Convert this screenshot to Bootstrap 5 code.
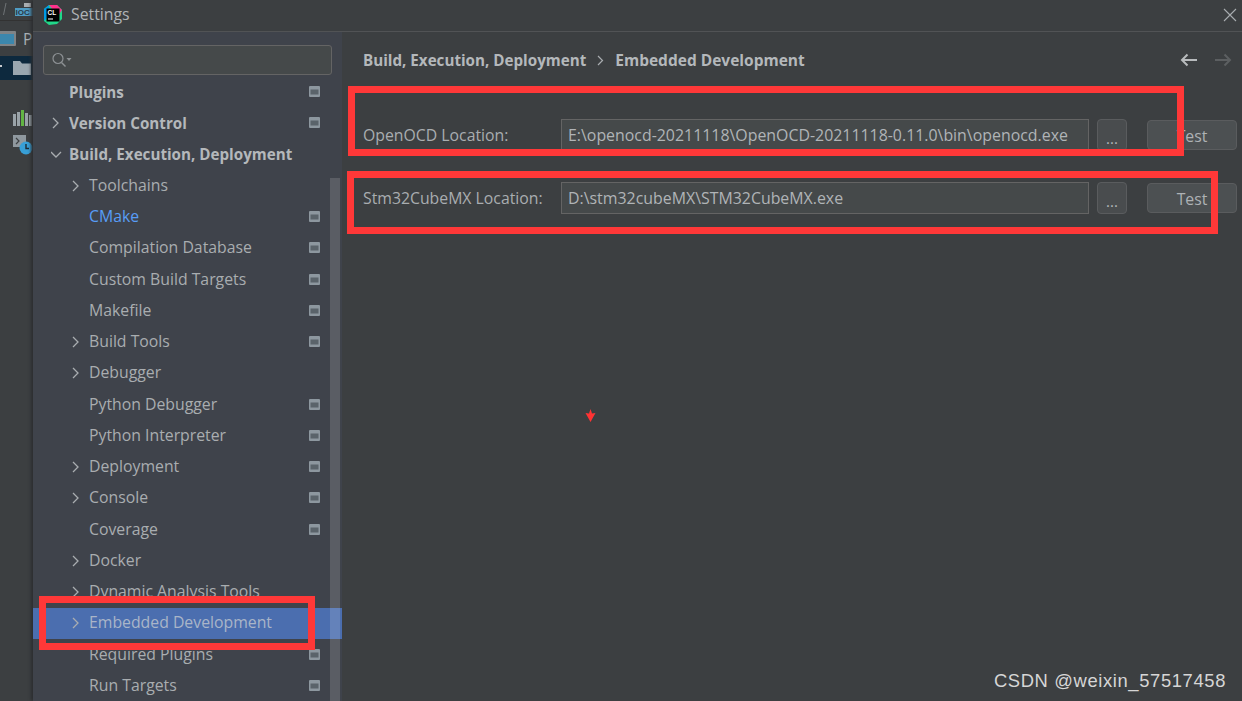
<!DOCTYPE html>
<html lang="en">
<head>
<meta charset="utf-8">
<title>Settings</title>
<link href="https://cdn.jsdelivr.net/npm/bootstrap@5.3.0/dist/css/bootstrap.min.css" rel="stylesheet">
<style>
html,body{height:100%;margin:0;background:#3c3f41;overflow:hidden}
body{font-family:"Open Sans","Noto Sans","Liberation Sans",sans-serif;font-size:15.8px;color:#b3b7ba;position:relative}
.ide-strip{width:33px;height:701px;background:#3c3f41;flex:none;overflow:hidden;position:relative}
.strip-top{height:21px;border-bottom:1px solid #323232}
.strip-tool{height:35px;gap:6px}
.strip-sel{height:24px;background:#0d293e;margin-bottom:30px}
.strip-icon{display:block;margin:0 0 9px 13px}
.strip-letter{color:#a9b0b5;font-size:15.8px;line-height:20px}
.dialog-win{width:1209px;height:701px;flex:none;box-shadow:-2px 0 3px #2c2e30;z-index:1}
.title-bar{height:32px;background:#3c3f41;border-bottom:1px solid #515355;padding:0 5px 2px 10px;gap:8px;color:#b0b4b7;font-size:15.8px;flex:none}
.title-bar .closer{margin-left:auto}
.pane-wrap{height:669px}
.side-pane{width:309px;flex:none;background:#3f434b;position:relative;overflow:hidden}
.search-area{height:52px;padding:13px 10px 0 10px;flex:none}
.search-box{height:30px;background:#45494a;border:1px solid #646464;border-radius:3px;padding-left:7px}
.tree-wrap{flex:1;overflow:hidden}
.tree-row{height:31.25px;padding-left:18px;white-space:nowrap;color:#a9adb0;position:relative;font-size:15.8px}
.tree-row:first-child{margin-top:-7.6px}
.tree-row.top-row{font-weight:700;font-size:15.2px;color:#b4b8bb}
.tree-row.sel-row{background:#4b6eaf;color:#a9b5c8}
.tree-row.link-row{color:#589df6}
.chev{width:18px;flex:none;display:block}
.chev-gap{width:18px;flex:none}
.sub-row{padding-left:38px}
.proj-icon{position:absolute;left:276px;top:50%;margin-top:-6px}
.scroll-bar{position:absolute;left:297px;top:146px;width:10px;bottom:0;background:rgba(255,255,255,.14)}
.main-pane{background:#3c3f41;padding:0 5px 0 21px;min-width:0}
.crumbs{height:56px;font-weight:700;font-size:15.2px;color:#b4b8bb;gap:11px;flex:none}
.crumbs .navs{margin-left:auto;gap:16px;padding-right:5px}
.crumb-end{font-size:15.5px;padding-top:1px}
.form-line{height:32px;margin-bottom:31px}
.first-line{margin-top:31px}
.field-lab{width:198px;flex:none;font-size:15.8px;color:#a9adb0;margin:0;padding-top:2px}
.path-input.form-control{width:528px;height:32px;flex:none;background:#45494a;border:1px solid #646464;border-radius:0;color:#b0b4b7;font:inherit;font-size:15.9px;padding:0 6px;box-shadow:none}
.more-btn.btn{width:30px;height:32px;margin-left:8px;padding:6px 0 0;background:#494c4e;border:1px solid #5a5c5e;border-radius:4px;color:#b4b8bb;font-size:15px;line-height:20px}
.test-btn.btn{width:90px;height:30px;margin-left:20px;padding:1px 0 0;background:#4c5052;border:1px solid #5a5c5e;border-radius:4px;color:#aeb2b5;font-size:15.8px;line-height:28px}
.mark-box{position:absolute;border:7px solid #ff3838;pointer-events:none;z-index:5}
.box-a{left:348px;top:86px;width:836px;height:70px}
.box-b{left:347px;top:171px;width:871px;height:63px}
.box-c{left:39px;top:596px;width:276px;height:54px}
.cursor-mark{position:absolute;left:585px;top:409px;z-index:5}
.water-mark{position:absolute;right:16px;bottom:8px;font:18.4px/24px "Liberation Sans",sans-serif;color:#d6d6d6;z-index:5;letter-spacing:.62px}
</style>
</head>
<body>
<div class="d-flex">
  <div class="ide-strip">
    <div class="strip-top">
      <svg width="33" height="20" viewBox="0 0 33 20"><path d="M6 0 3.500 12" fill="none" stroke="#6f7376" stroke-width="1"/><rect x="24" y="0" width="7" height="4" fill="#a9adb0"/><rect x="15" y="5" width="18" height="8" fill="#4f9cc4"/><text x="15.500" y="12" font-family="Liberation Sans" font-weight="700" font-size="8" fill="#2b3b48">IOC</text></svg>
    </div>
    <div class="strip-tool d-flex align-items-center">
      <svg width="17" height="16" viewBox="0 0 17 16"><rect x="-3" y="0" width="19" height="15" rx="1" fill="#7f8386"/><rect x="0" y="3" width="14" height="10" fill="#3c87ad"/></svg>
      <span class="strip-letter">P</span>
    </div>
    <div class="strip-sel d-flex align-items-center">
      <svg width="31" height="14" viewBox="0 0 31 14"><rect x="0" y="4" width="2" height="2" fill="#c8ccd0"/><path d="M13 0h7l2 2.500h9V14H13z" fill="#9aa7b0"/></svg>
    </div>
    <svg class="strip-icon" width="19" height="16" viewBox="0 0 19 16"><rect x="0" y="4" width="3" height="12" fill="#9aa3a8"/><rect x="4" y="2" width="3" height="14" fill="#9aa3a8"/><rect x="8" y="0" width="3" height="16" fill="#62b543"/><rect x="12" y="3" width="3" height="13" fill="#9aa3a8"/><rect x="16" y="5" width="3" height="11" fill="#9aa3a8"/></svg>
    <svg class="strip-icon" width="20" height="20" viewBox="0 0 20 20"><rect x="0" y="0" width="13" height="12" fill="#8f989e"/><path d="M3 3l3 3-3 3" fill="none" stroke="#3c3f41" stroke-width="1.200"/><circle cx="13" cy="13" r="6.500" fill="#389fd6"/><path d="M13 9v4.500h3" fill="none" stroke="#1d2a33" stroke-width="1.400"/></svg>
  </div>
  <div class="dialog-win d-flex flex-column">
    <div class="title-bar d-flex align-items-center">
      <svg width="20" height="20" viewBox="0 0 20 20"><path d="M1 4 6 0h8l5 5v9l-5 5-8 1-5-4z" fill="#21d789"/><path d="M6 0h8l5 5-4 6z" fill="#ff318c"/><path d="M1 4 6 0l1 10-6 6z" fill="#009ae5"/><rect x="3.500" y="3.500" width="13" height="13" fill="#000"/><text x="4.600" y="10" font-family="Liberation Sans" font-weight="700" font-size="6.500" fill="#fff">CL</text><rect x="5" y="13.500" width="5" height="1" fill="#fff"/></svg>
      <span>Settings</span>
      <svg class="closer" width="14" height="14" viewBox="0 0 14 14"><path d="M1 1l12 12M13 1 1 13" stroke="#a9adb0" stroke-width="1.100"/></svg>
    </div>
    <div class="pane-wrap d-flex">
      <div class="side-pane d-flex flex-column">
        <div class="search-area">
          <div class="search-box d-flex align-items-center">
            <svg width="22" height="16" viewBox="0 0 22 16"><circle cx="7" cy="6.500" r="5" fill="none" stroke="#8d9194" stroke-width="1.200"/><path d="M10.500 10.500l4 4" stroke="#8d9194" stroke-width="1.400"/><path d="M15.500 6h5l-2.500 3z" fill="#8d9194"/></svg>
          </div>
        </div>
        <div class="tree-wrap" id="tree"></div>
        <div class="scroll-bar"></div>
      </div>
      <div class="main-pane flex-grow-1 d-flex flex-column">
        <div class="crumbs d-flex align-items-center">
          <span>Build, Execution, Deployment</span>
          <svg width="7" height="11" viewBox="0 0 7 11"><path d="M1 1l4.500 4.500L1 10" fill="none" stroke="#a9adb0" stroke-width="1.200"/></svg>
          <span class="crumb-end">Embedded Development</span>
          <div class="navs d-flex align-items-center">
            <svg width="18" height="14" viewBox="0 0 18 14"><path d="M17 7H2M7.500 1.500 2 7l5.500 5.500" fill="none" stroke="#b8bbbd" stroke-width="2"/></svg>
            <svg width="18" height="14" viewBox="0 0 18 14"><path d="M1 7h15M10.500 1.500 16 7l-5.500 5.500" fill="none" stroke="#5c5f61" stroke-width="2"/></svg>
          </div>
        </div>
        <div class="form-line first-line d-flex align-items-center">
          <label class="field-lab">OpenOCD Location:</label>
          <input class="path-input form-control" type="text" value="E:\openocd-20211118\OpenOCD-20211118-0.11.0\bin\openocd.exe">
          <button class="more-btn btn" type="button">...</button>
          <button class="test-btn btn" type="button">Test</button>
        </div>
        <div class="form-line d-flex align-items-center">
          <label class="field-lab">Stm32CubeMX Location:</label>
          <input class="path-input form-control" type="text" value="D:\stm32cubeMX\STM32CubeMX.exe">
          <button class="more-btn btn" type="button">...</button>
          <button class="test-btn btn" type="button">Test</button>
        </div>
      </div>
    </div>
  </div>
</div>
<div class="mark-box box-a"></div>
<div class="mark-box box-b"></div>
<div class="mark-box box-c"></div>
<svg class="cursor-mark" width="11" height="13" viewBox="0 0 11 13"><path d="M5.500 0 7 4.500 10.500 4 5.500 13 .5 4 4 4.500z" fill="#f33"/></svg>
<div class="water-mark">CSDN @weixin_57517458</div>
<script>
var R=[["Plugins","t",0,1],["Version Control","t",1,1],["Build, Execution, Deployment","t",2,0],
["Toolchains","s",1,0],["CMake","s",0,1,"link-row"],["Compilation Database","s",0,1],["Custom Build Targets","s",0,1],["Makefile","s",0,1],["Build Tools","s",1,1],["Debugger","s",1,0],["Python Debugger","s",0,1],["Python Interpreter","s",0,1],["Deployment","s",1,1],["Console","s",1,1],["Coverage","s",0,1],["Docker","s",1,0],["Dynamic Analysis Tools","s",1,0],["Embedded Development","s",1,0,"sel-row"],["Required Plugins","s",0,1],["Run Targets","s",0,1]];
var right='<svg class="chev" width="18" height="12" viewBox="0 0 18 12"><path d="M1 1l5 5-5 5" transform="translate(1 0)" fill="none" stroke="#a9adb0" stroke-width="1.300"/></svg>';
var down='<svg class="chev" width="18" height="12" viewBox="0 0 18 12"><path d="M0 3l5 5 5-5" fill="none" stroke="#a9adb0" stroke-width="1.300"/></svg>';
var icon='<svg class="proj-icon" width="11" height="11" viewBox="0 0 11 11"><rect width="11" height="11" rx="1" fill="#8d979f"/><rect x="1.500" y="3.500" width="8" height="5" fill="#5a636a"/></svg>';
document.getElementById('tree').innerHTML=R.map(function(r){
 var c=r[2]==2?down:(r[2]==1?right:'<span class="chev-gap"></span>');
 return '<div class="tree-row d-flex align-items-center '+(r[1]=="t"?'top-row ':'sub-row ')+(r[4]||'')+'">'+c+'<span>'+r[0]+'</span>'+(r[3]?icon:'')+'</div>';
}).join('');
</script>
<script src="https://cdn.jsdelivr.net/npm/bootstrap@5.3.0/dist/js/bootstrap.bundle.min.js"></script>
</body>
</html>
